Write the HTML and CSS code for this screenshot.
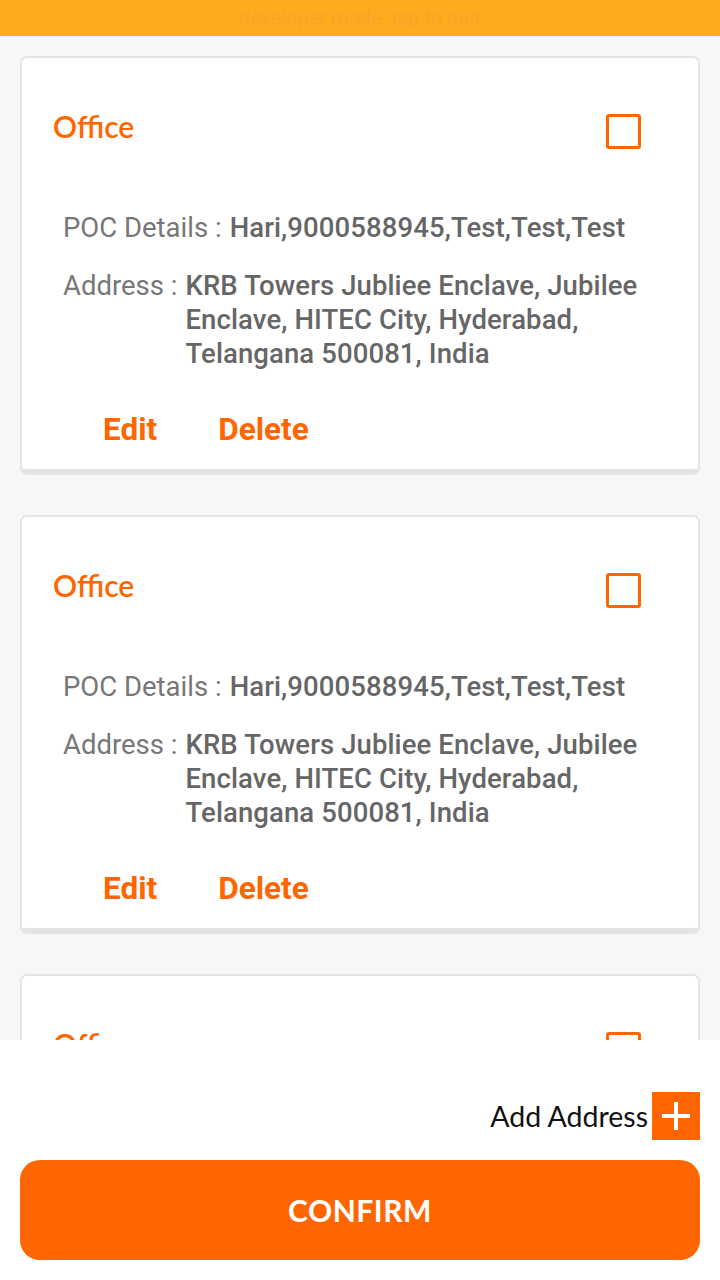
FILE: index.html
```html
<!DOCTYPE html>
<html lang="en">
<head>
<meta charset="utf-8">
<title>Addresses</title>
<link rel="stylesheet" href="styles.css">
</head>
<body>
<div class="devbar">developer mode, tap to quit</div>
<main class="list">
  <section class="card">
    <div class="card-head">
      <span class="card-title">Office</span>
      <span class="checkbox"></span>
    </div>
    <div class="row poc"><span class="label">POC Details :</span><span class="value">Hari,9000588945,Test,Test,Test</span></div>
    <div class="row addr"><span class="label">Address :</span><span class="value">KRB Towers Jubliee Enclave, Jubilee Enclave, HITEC City, Hyderabad, Telangana 500081, India</span></div>
    <div class="actions"><span class="action">Edit</span><span class="action">Delete</span></div>
  </section>
  <section class="card">
    <div class="card-head">
      <span class="card-title">Office</span>
      <span class="checkbox"></span>
    </div>
    <div class="row poc"><span class="label">POC Details :</span><span class="value">Hari,9000588945,Test,Test,Test</span></div>
    <div class="row addr"><span class="label">Address :</span><span class="value">KRB Towers Jubliee Enclave, Jubilee Enclave, HITEC City, Hyderabad, Telangana 500081, India</span></div>
    <div class="actions"><span class="action">Edit</span><span class="action">Delete</span></div>
  </section>
  <section class="card">
    <div class="card-head">
      <span class="card-title">Office</span>
      <span class="checkbox"></span>
    </div>
    <div class="row poc"><span class="label">POC Details :</span><span class="value">Hari,9000588945,Test,Test,Test</span></div>
    <div class="row addr"><span class="label">Address :</span><span class="value">KRB Towers Jubliee Enclave, Jubilee Enclave, HITEC City, Hyderabad, Telangana 500081, India</span></div>
    <div class="actions"><span class="action">Edit</span><span class="action">Delete</span></div>
  </section>
</main>
<footer class="bottom">
  <div class="add-row">
    <span class="add-text">Add Address</span>
    <span class="add-btn"><svg width="48" height="48" viewBox="0 0 48 48"><path d="M24 10v28M10 24h28" stroke="#fff" stroke-width="4" fill="none"/></svg></span>
  </div>
  <button class="confirm"><span>CONFIRM</span></button>
</footer>
</body>
</html>
```
FILE: styles.css
```css
html, body {
  margin: 0;
  padding: 0;
}
body {
  background: #f7f7f7;
  width: 720px;
  height: 1280px;
  overflow: hidden;
  font-family: Roboto, "Liberation Sans", sans-serif;
}
.devbar {
  height: 36px;
  background: #ffab20;
  color: #f9a52a;
  font-family: Roboto, sans-serif;
  font-size: 20px;
  line-height: 36px;
  text-align: center;
}
.list {
  padding: 20px 20px 0;
  display: flex;
  flex-direction: column;
  gap: 40px;
}
.card {
  background: #fff;
  border: 2px solid #e4e4e4;
  border-bottom-width: 6px;
  border-radius: 7px;
  padding: 56px 57px 19px 31px;
  flex-shrink: 0;
}
.card-head {
  display: flex;
  align-items: center;
  justify-content: space-between;
  height: 35px;
}
.card-title {
  font-family: Lato, sans-serif;
  font-size: 30px;
  font-weight: 600;
  color: #ff6600;
  margin-bottom: 12px;
}
.checkbox {
  width: 29px;
  height: 29px;
  border: 3px solid #ff6600;
  border-radius: 3px;
}
.row {
  display: flex;
  gap: 8px;
  padding-left: 10px;
  font-size: 27.5px;
  line-height: 34px;
}
.poc {
  margin-top: 62px;
}
.addr {
  margin-top: 24px;
}
.label {
  color: #777;
  flex-shrink: 0;
}
.value {
  color: #666;
  font-weight: 500;
  letter-spacing: 0.1px;
}
.actions {
  display: flex;
  gap: 61px;
  padding-left: 50px;
  margin-top: 39px;
}
.action {
  font-size: 31.5px;
  line-height: 40px;
  font-weight: 700;
  color: #ff6600;
}
.bottom {
  position: fixed;
  left: 0;
  right: 0;
  bottom: 0;
  height: 240px;
  box-sizing: border-box;
  background: #fff;
  padding: 52px 20px 20px;
  display: flex;
  flex-direction: column;
  gap: 20px;
}
.add-row {
  display: flex;
  justify-content: flex-end;
  align-items: center;
  gap: 4px;
}
.add-text {
  font-family: Lato, sans-serif;
  font-size: 28.5px;
  line-height: 1;
  color: #111;
}
.add-btn {
  width: 48px;
  height: 48px;
  background: #ff6600;
  display: block;
}
.add-btn svg {
  display: block;
}
.confirm {
  height: 100px;
  border: none;
  border-radius: 20px;
  background: #ff6600;
  color: #fff;
  font-family: Lato, sans-serif;
  font-weight: 700;
  font-size: 30px;
  line-height: 1;
  letter-spacing: 0.5px;
  padding: 0;
}
```
